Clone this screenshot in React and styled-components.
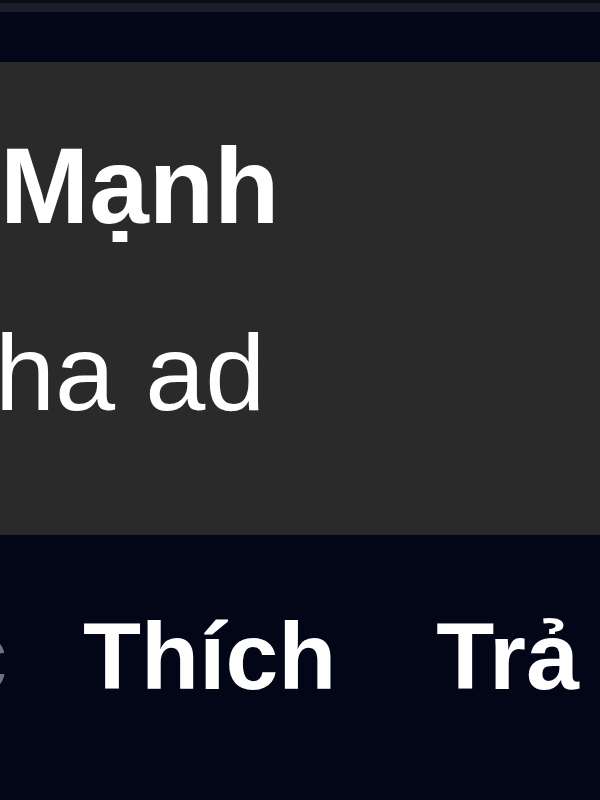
import React from "react";
import styled, { createGlobalStyle } from "styled-components";

const Global = createGlobalStyle`
  html, body { margin: 0; padding: 0; background: #020617; }
  body { font-family: "Liberation Sans", Arial, sans-serif; }
`;

const Viewport = styled.div`
  width: 600px;
  height: 800px;
  overflow: hidden;
  background: #020617;
  display: flex;
  flex-direction: column;
`;

const TopEdge = styled.div`
  height: 3px;
  background: #0a0d18;
  flex: 0 0 auto;
`;

const Divider = styled.div`
  height: 9px;
  background: #1b1e29;
  flex: 0 0 auto;
`;

const Spacer = styled.div`
  height: ${(p) => p.$h}px;
  flex: 0 0 auto;
`;

const Bubble = styled.div`
  flex: 0 0 auto;
  height: 473px;
  box-sizing: border-box;
  margin-left: -60px;
  margin-right: -40px;
  padding: 60px 0 0 55px;
  background: #2a2a2a;
  color: #ffffff;
  display: flex;
  flex-direction: column;
`;

const Name = styled.div`
  margin-left: 5px;
  font-size: 107px;
  line-height: 128px;
  font-weight: 700;
  white-space: nowrap;
`;

const Body = styled.div`
  margin-top: 58px;
  font-size: 108px;
  line-height: 130px;
  font-weight: 400;
  white-space: nowrap;
`;

const Actions = styled.div`
  margin-top: 64px;
  display: flex;
  align-items: baseline;
  font-size: 95px;
  line-height: 114px;
  white-space: nowrap;
`;

const Time = styled.div`
  width: 7px;
  overflow: hidden;
  display: flex;
  justify-content: flex-end;
  color: #6f727a;
  font-weight: 400;
  flex: 0 0 auto;
`;

const Action = styled.div`
  font-weight: 700;
  color: #ffffff;
  margin-left: ${(p) => p.$gap}px;
  flex: 0 0 auto;
`;

export default function App() {
  return (
    <>
      <Global />
      <Viewport>
        <TopEdge />
        <Divider />
        <Spacer $h={50} />
        <Bubble>
          <Name>Mạnh</Name>
          <Body>ha ad</Body>
        </Bubble>
        <Actions>
          <Time>
            <span>2 tuần trước</span>
          </Time>
          <Action $gap={76}>Thích</Action>
          <Action $gap={100}>Trả lời</Action>
        </Actions>
      </Viewport>
    </>
  );
}
